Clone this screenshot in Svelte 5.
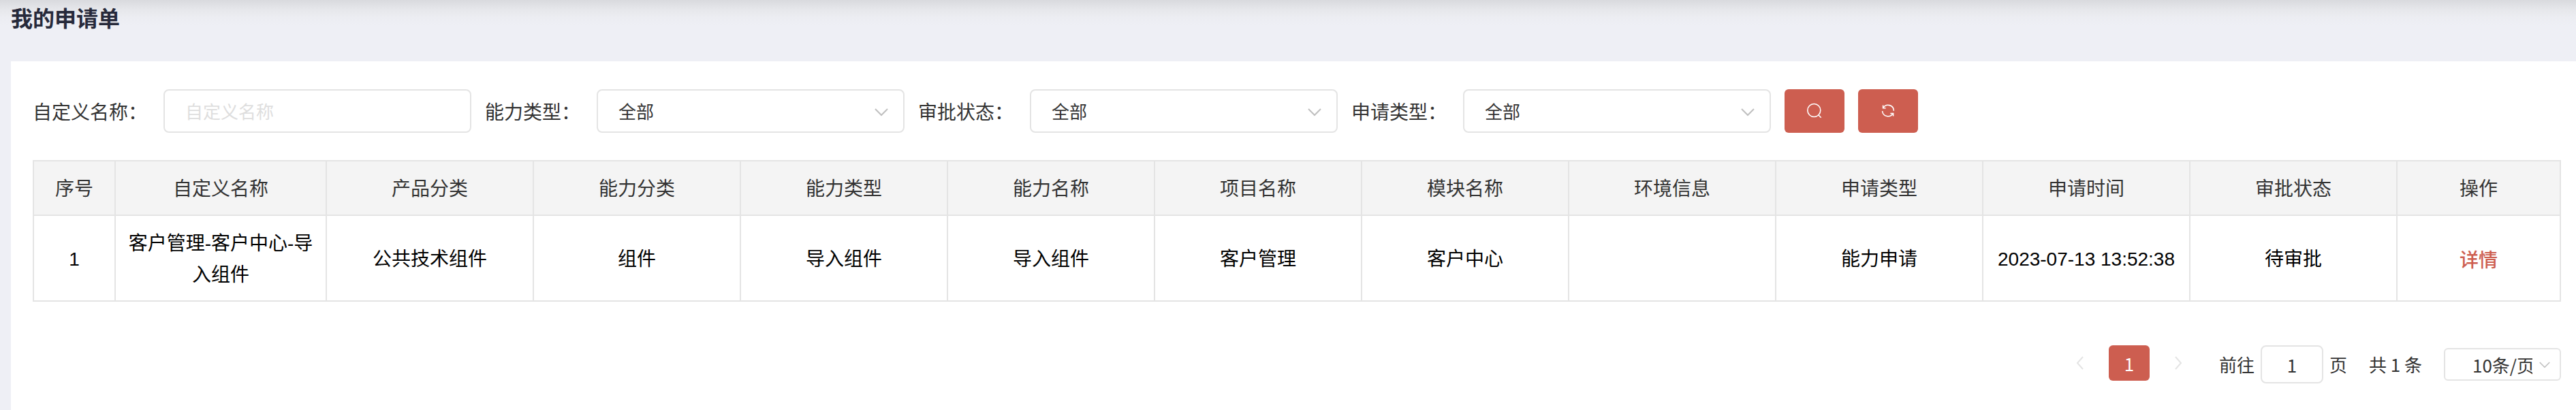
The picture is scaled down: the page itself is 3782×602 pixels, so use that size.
<script>
  const typeFilters = [
    { id: 'ability-type', label: '能力类型' },
    { id: 'approval-status', label: '审批状态' },
    { id: 'apply-type', label: '申请类型' }
  ];
  const columns = [
    '序号', '自定义名称', '产品分类', '能力分类', '能力类型', '能力名称', '项目名称',
    '模块名称', '环境信息', '申请类型', '申请时间', '审批状态', '操作'
  ];
  const rows = [
    ['1', '客户管理-客户中心-导入组件', '公共技术组件', '组件', '导入组件', '导入组件',
      '客户管理', '客户中心', '', '能力申请', '2023-07-13 13:52:38', '待审批']
  ];
</script>

<div class="page" lang="zh-CN">
  <h1>我的申请单</h1>
  <main class="card">
    <form class="filters" onsubmit={(e) => e.preventDefault()}>
      <div class="field">
        <label for="custom-name">自定义名称：</label>
        <input id="custom-name" class="control" type="text" placeholder="自定义名称" />
      </div>
      {#each typeFilters as f}
        <div class="field">
          <label for={f.id}>{f.label}：</label>
          <div class="select">
            <select id={f.id} class="control"><option>全部</option></select>
            <svg class="chevron" width="20" height="12" viewBox="0 0 20 12"><path d="M1 1l9 9 9-9" /></svg>
          </div>
        </div>
      {/each}
      <button class="action" type="submit" aria-label="搜索">
        <svg width="24" height="24" viewBox="0 0 24 24"><circle cx="11.3" cy="11" r="9.5" /><path d="M17.5 17.5l4.2 4.2" /></svg>
      </button>
      <button class="action" type="reset" aria-label="重置">
        <svg width="24" height="24" viewBox="0 0 24 24">
          <path d="M4.8 7.4A8.4 8.4 0 0 1 20.4 11.8" /><path d="M4.6 3.6V7.8H8.6" />
          <path d="M3.6 12A8.4 8.4 0 0 0 19.2 15.6" /><path d="M15.4 15.6H19.6V19.6" />
        </svg>
      </button>
    </form>

    <table>
      <colgroup>
        {#each columns as c, i}
          <col class:col-index={i === 0} class:col-name={i === 1} class:col-action={i === 12} />
        {/each}
      </colgroup>
      <thead>
        <tr>{#each columns as c}<th scope="col">{c}</th>{/each}</tr>
      </thead>
      <tbody>
        {#each rows as row}
          <tr>
            {#each row as cell}<td>{cell}</td>{/each}
            <td><a href="#detail">详情</a></td>
          </tr>
        {/each}
      </tbody>
    </table>

    <nav class="pagination" aria-label="分页">
      <div class="pager">
        <button class="arrow" type="button" aria-label="上一页" disabled>
          <svg width="12" height="20" viewBox="0 0 12 20"><path d="M10 1L2 10l8 9" /></svg>
        </button>
        <button class="current" type="button" aria-current="page">1</button>
        <button class="arrow" type="button" aria-label="下一页" disabled>
          <svg width="12" height="20" viewBox="0 0 12 20"><path d="M2 1l8 9-8 9" /></svg>
        </button>
      </div>
      <label class="jump">前往<input type="text" value="1" />页</label>
      <span class="total">共 1 条</span>
      <div class="select size">
        <select aria-label="每页条数"><option>10条/页</option></select>
        <svg class="chevron" width="16" height="10" viewBox="0 0 20 12"><path d="M1 1l9 9 9-9" /></svg>
      </div>
    </nav>
  </main>
</div>

<style>
  :global(body) {
    margin: 0;
    background: #eeeff5;
  }
  .page {
    box-sizing: border-box;
    min-height: 100vh;
    display: flex;
    flex-direction: column;
    padding-left: 16px;
    background: linear-gradient(#d9dade, #e6e7eb 14px, #ecedf2 26px, #eeeff5 38px);
    color: #333;
    font-family: "Liberation Sans", "Noto Sans CJK SC", sans-serif;
    font-size: 28px;
  }
  h1 {
    margin: 0;
    padding: 1px 0 41px;
    color: #272a3b;
    font-family: "Noto Sans CJK SC", sans-serif;
    font-size: 32px;
    font-weight: 700;
    line-height: 48px;
  }
  .card {
    flex: 1;
    padding: 41px 22px 38px 32px;
    background: #fff;
  }
  .filters {
    display: flex;
    flex-wrap: wrap;
    align-items: center;
    gap: 20px;
    margin-bottom: 40px;
    font-family: "Noto Sans CJK SC", sans-serif;
  }
  .field {
    display: flex;
    align-items: center;
    gap: 24px;
  }
  label {
    line-height: 40px;
    white-space: nowrap;
  }
  input,
  select,
  button {
    box-sizing: border-box;
    margin: 0;
    font-family: inherit;
    color: #333;
  }
  input,
  select {
    appearance: none;
    background: #fff;
    border: 2px solid #e4e4e4;
    border-radius: 8px;
    font-size: 26px;
    outline: none;
  }
  .control {
    width: 452px;
    height: 64px;
    padding: 0 30px 2px;
  }
  input::placeholder {
    color: #dedede;
    opacity: 1;
  }
  .select {
    position: relative;
    display: flex;
  }
  svg {
    display: block;
    fill: none;
    stroke: currentColor;
    stroke-width: 2;
  }
  .chevron {
    position: absolute;
    top: 50%;
    right: 24px;
    margin-top: -4px;
    color: #bfbfbf;
    pointer-events: none;
  }
  .action {
    display: grid;
    place-items: center;
    width: 88px;
    height: 64px;
    padding: 0;
    border: 0;
    border-radius: 6px;
    background: #cd5e50;
    color: #fff;
  }
  .action svg {
    stroke-width: 1.6;
  }
  table {
    width: 100%;
    table-layout: fixed;
    border-collapse: collapse;
    line-height: 46px;
  }
  .col-index { width: 120px; }
  .col-name { width: 310px; }
  .col-action { width: 240px; }
  th,
  td {
    border: 2px solid #e4e4e4;
    padding: 18px 16px 14px;
    text-align: center;
    vertical-align: middle;
    font-weight: 400;
  }
  th {
    background: #f4f4f4;
  }
  td {
    color: #000;
    word-break: break-all;
  }
  a {
    color: #cd5e50;
    font-family: "Noto Sans CJK SC", sans-serif;
    font-weight: 500;
    text-decoration: none;
  }
  .pagination {
    display: flex;
    align-items: center;
    justify-content: flex-end;
    margin-top: 64px;
    font-family: "Noto Sans CJK SC", sans-serif;
    font-size: 26px;
    line-height: 40px;
  }
  .pager {
    display: flex;
    gap: 12px;
    padding-bottom: 4px;
  }
  .arrow {
    width: 60px;
    height: 52px;
    display: grid;
    place-items: center;
    padding: 0;
    border: 0;
    background: none;
    color: #e4e4e4;
  }
  .current {
    width: 60px;
    height: 52px;
    padding: 0;
    border: 0;
    border-radius: 6px;
    background: #cd5e50;
    color: #fff;
    font-size: 26px;
  }
  .jump {
    display: flex;
    align-items: center;
    gap: 9px;
    margin-left: 30px;
  }
  .jump input {
    width: 92px;
    height: 56px;
    padding: 0;
    text-align: center;
  }
  .total {
    margin: 0 32px;
  }
  .size select {
    width: 172px;
    height: 48px;
    padding: 0 40px;
    border-radius: 6px;
  }
  .size .chevron {
    right: 16px;
  }
</style>
